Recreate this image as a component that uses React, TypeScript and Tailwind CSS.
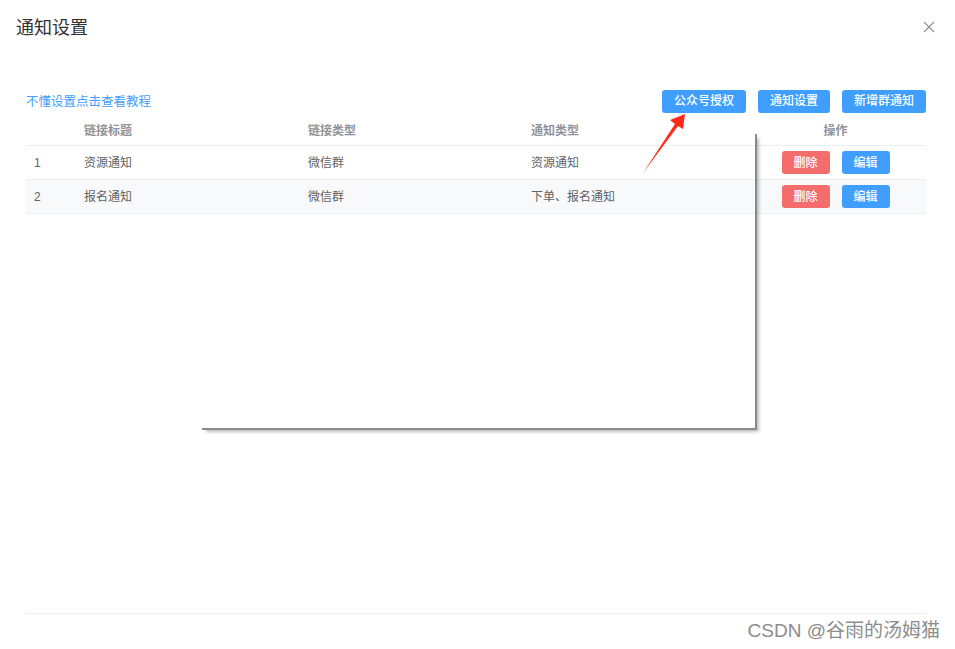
const FONT = {
  fontFamily: '"Helvetica Neue", "Liberation Sans", "Noto Sans CJK SC", sans-serif',
};

type NoticeRow = {
  index: number;
  title: string;
  linkType: string;
  noticeType: string;
};

const ROWS: NoticeRow[] = [
  { index: 1, title: "资源通知", linkType: "微信群", noticeType: "资源通知" },
  { index: 2, title: "报名通知", linkType: "微信群", noticeType: "下单、报名通知" },
];

const COLS = "grid grid-cols-[48px_224px_223px_224px_181px]";

export default function App() {
  return (
    <div className="relative flex h-[649px] w-full flex-col bg-white" style={FONT}>
      {/* dialog header */}
      <div className="flex h-[56px] items-start justify-between pl-4 pr-[18px] pt-[16px]">
        <h1 className="text-[18px] leading-[24px] text-[#303133]">通知设置</h1>
        <svg width="16" height="16" viewBox="0 0 16 16" className="mt-[3px]">
          <path d="M3 3 L13 13 M13 3 L3 13" stroke="#909399" strokeWidth="1.2" fill="none" />
        </svg>
      </div>

      {/* toolbar */}
      <div className="ml-[26px] mr-[29px] mt-[34px] flex h-[23px] items-center justify-between">
        <a className="text-[12.5px] leading-[20px] text-[#409eff]">不懂设置点击查看教程</a>
        <div className="flex gap-3">
          <ToolButton label="公众号授权" />
          <ToolButton label="通知设置" />
          <ToolButton label="新增群通知" />
        </div>
      </div>

      {/* table */}
      <div className="ml-[26px] mr-[29px] mt-[3px] text-[12px]">
        <div className={`${COLS} h-[30px] items-center border-b border-[#ebeef5] font-bold text-[#909399]`}>
          <div className="pl-2" />
          <div className="pl-[10px]">链接标题</div>
          <div className="pl-[10px]">链接类型</div>
          <div className="pl-[10px]">通知类型</div>
          <div className="text-center">操作</div>
        </div>
        {ROWS.map((row, i) => (
          <div
            key={row.index}
            className={`${COLS} h-[34px] items-center border-b border-[#ebeef5] text-[#606266] ${
              i % 2 === 1 ? "bg-[#f8f9fb]" : "bg-white"
            }`}
          >
            <div className="pl-2">{row.index}</div>
            <div className="pl-[10px]">{row.title}</div>
            <div className="pl-[10px]">{row.linkType}</div>
            <div className="pl-[10px]">{row.noticeType}</div>
            <div className="flex justify-center gap-3">
              <button className="h-[23px] w-[48px] rounded-[3px] bg-[#f56c6c] text-[12px] font-medium text-white">删除</button>
              <button className="h-[23px] w-[48px] rounded-[3px] bg-[#409eff] text-[12px] font-medium text-white">编辑</button>
            </div>
          </div>
        ))}
      </div>

      {/* dialog footer line */}
      <div className="ml-[26px] mr-[29px] mt-auto h-[36px] border-t border-[#ebeef5]" />

      {/* screenshot annotations */}
      <div className="pointer-events-none absolute left-[202px] top-[134px] h-[296px] w-[555px] border-b-2 border-r-2 border-[#8a8a8a] shadow-[3px_3px_3px_-1px_rgba(0,0,0,0.25)]" />
      <svg className="pointer-events-none absolute left-0 top-0" width="955" height="649">
        <polygon
          points="685,114 670,120 675,124 643,173 678,126 683,129"
          fill="#ff2a1a"
        />
      </svg>

      <div className="pointer-events-none absolute bottom-[6px] right-[15px] text-[19px] leading-[24px] text-[#8c8c8c]">
        CSDN @谷雨的汤姆猫
      </div>
    </div>
  );
}

function ToolButton({ label }: { label: string }) {
  return (
    <button className="h-[23px] rounded-[3px] bg-[#409eff] px-3 text-[12px] font-medium leading-[23px] text-white">
      {label}
    </button>
  );
}
